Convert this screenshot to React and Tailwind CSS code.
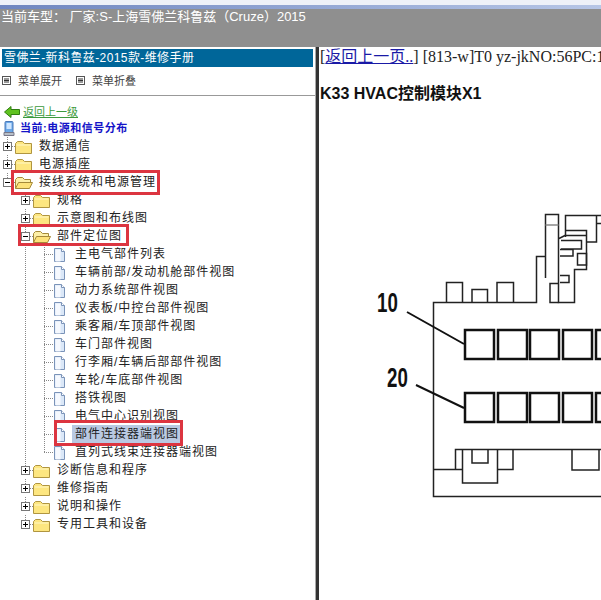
import React from "react";

const cjk = { fontFamily: '"Liberation Sans","Noto Sans CJK SC",sans-serif' };

function Gutter({ level, kind, open, guides, last }) {
  // draws the tree connectors, the expander and the folder/document icon for a row
  const mid = 9;
  const boxX = level === 0 ? 7 : 25;
  return (
    <svg width="70" height="18" viewBox="0 0 70 18" className="shrink-0 block">
      {guides.map((g) => (
        <line key={g} x1={g + 0.5} y1="0" x2={g + 0.5} y2="18" stroke="#888" strokeDasharray="1 1" />
      ))}
      {kind === "doc" ? (
        <>
          <line x1="44.5" y1="0" x2="44.5" y2={last ? 9 : 18} stroke="#888" strokeDasharray="1 1" />
          <line x1="44" y1="9.5" x2="54" y2="9.5" stroke="#888" strokeDasharray="1 1" />
          <path d="M54.5 3.5h7l3 3v10h-10z" fill="#dbe8f8" stroke="#7a93b8" />
          <path d="M55.5 4.5h5v12h-5z" fill="#f6f9fe" />
          <path d="M61.5 3.5v3h3" fill="#fff" stroke="#7a93b8" />
        </>
      ) : (
        <g transform={`translate(${boxX - 7} 0)`}>
          <line x1="7.5" y1={level === 0 ? 0 : 0} x2="7.5" y2="5" stroke="#888" strokeDasharray="1 1" />
          <line x1="12" y1="9.5" x2="16" y2="9.5" stroke="#888" strokeDasharray="1 1" />
          <rect x="3.5" y="5.5" width="8" height="8" fill="#fff" stroke="#777" />
          <line x1="5" y1="9.5" x2="10" y2="9.5" stroke="#000" />
          {!open && <line x1="7.5" y1="7" x2="7.5" y2="12" stroke="#000" />}
          {open ? (
            <>
              <path d="M15.5 15.5v-9l2-2h5l2 2h6v3" fill="#fdf0a8" stroke="#a58a3a" />
              <path d="M15.5 15.5l3-6h14l-3 6z" fill="#fde27a" stroke="#a58a3a" />
            </>
          ) : (
            <>
              <path d="M15.5 6.5l2-2h5l2 2h7v10h-16z" fill="#fde680" stroke="#b09540" />
              <path d="M16.5 7.5h14v1h-14z" fill="#fff8c8" />
            </>
          )}
        </g>
      )}
    </svg>
  );
}

function Row({ label, level, kind = "folder", open, guides = [], last, mark, selected, labelX }) {
  const width = labelX;
  return (
    <div className={`relative isolate flex h-[18px] items-center ${mark ? "z-10" : ""}`}>
      {mark && <div className={`absolute -z-10 bg-white ${mark}`} />}
      <div className="relative shrink-0 overflow-hidden" style={{ width }}>
        <Gutter level={level} kind={kind} open={open} guides={guides} last={last} />
      </div>
      <span
        className={`whitespace-nowrap text-[12px] leading-[18px] tracking-[1px] text-[#222] ${selected ? "bg-[#b9c9e2] pr-[3px] pl-[3px] -ml-[3px]" : ""}`}
        style={cjk}
      >
        {label}
      </span>
      {mark && <div className={`absolute z-10 border-[3px] border-[#dc3540] ${mark}`} />}
    </div>
  );
}

function MenuIcon() {
  return (
    <svg width="10" height="10" viewBox="0 0 10 10" className="shrink-0">
      <rect x="0.5" y="0.5" width="8" height="8" fill="#fff" stroke="#555" />
      <path d="M2 3h5M2 4.5h5M2 6h5" stroke="#333" />
    </svg>
  );
}

function Diagram() {
  const boxes = [464, 497, 529, 562, 595];
  return (
    <svg width="282" height="395" viewBox="319 205 282 395" className="block" fill="none" stroke="#222" strokeWidth="1.5">
      <path d="M601 497.5H433.5V303.5H536.5V257.5H545" />
      <path d="M446.5 303V283.5H462.5V303M472 303V290.5H487.5V303M497 303V283.5H513.5V303" />
      <path d="M545.5 279V215.5H558.5V303.5H574.5V270.5H586.5V231.5H565.5" />
      <path d="M545.5 226H558.5" stroke="#888" />
      <path d="M558.5 284.5H550V303.5H558.5" />
      <path d="M565.5 238V216.5H601M596.5 216.5V243H586.5M597 224.5H601" />
      <path d="M565.5 236.5H586M561 241.5H581.5V250H561M560 250.5H573V257H560M577.5 254.5H586.5V266H577.5ZM560 276.5H569V283.5H560M559 239.5L566 236" />
      <path d="M455.5 470.5V450.5H601M433 470.5H462.5" />
      <path d="M462.5 450.5V484H497.5V450.5M472 450.5V464H488V450.5M497.5 470.5H513V450.5M572 450.5V471H599V450.5" />
      <path d="M407 313L464 345M416 386L464 409" stroke="#111" strokeWidth="2" />
      {[330, 393].map((y) =>
        boxes.map((x) => (
          <rect key={`${x}-${y}`} x={x + 1} y={y + 1} width="29" height="29" stroke="#111" strokeWidth="2.5" />
        ))
      )}
      <text x="0" y="0" transform="translate(377 313) scale(0.78 1.15)" fill="#111" stroke="none" fontSize="24" fontWeight="700" fontFamily="Liberation Sans">10</text>
      <text x="0" y="0" transform="translate(387 388) scale(0.78 1.15)" fill="#111" stroke="none" fontSize="24" fontWeight="700" fontFamily="Liberation Sans">20</text>
    </svg>
  );
}

export default function App() {
  return (
    <div className="flex h-[600px] w-[601px] flex-col overflow-hidden bg-white" style={cjk}>
      <div className="h-[5px] shrink-0 bg-[#eef1f8]" />
      <div className="h-[4px] shrink-0 bg-gradient-to-r from-[#6f86c0] to-[#b7c6e6]" />
      <div className="h-[38px] shrink-0 bg-[#8f8f8f] pl-[1px] text-[13px] leading-[14px] text-white pt-[1px]">
        当前车型： 厂家:S-上海雪佛兰科鲁兹（Cruze）2015
      </div>
      <div className="flex min-h-0 flex-1">
        <div className="w-[316px] shrink-0 border-r border-[#aaa]">
          <div className="mx-[2px] mt-[2px] flex h-[18px] w-[311px] items-center bg-[#006699] pl-[2px] text-[12px] tracking-[0.4px] text-white">
            雪佛兰-新科鲁兹-2015款-维修手册
          </div>
          <div className="flex h-[28px] items-center border-b-0 pl-[2px] text-[11px] text-[#444]">
            <MenuIcon />
            <span className="ml-[6px] w-[58px]">菜单展开</span>
            <MenuIcon />
            <span className="ml-[6px]">菜单折叠</span>
          </div>
          <div className="h-[1px] bg-[#999]" />
          <div className="flex h-[24px] items-end pl-[4px] pb-[1px]">
            <svg width="16" height="12" viewBox="0 0 16 12" className="shrink-0 mb-[1px]">
              <path d="M0.5 6L7 0.5V3.5H15.5V8.5H7V11.5Z" fill="#5fc21f" stroke="#2f7d10" />
            </svg>
            <span className="ml-[3px] text-[11px] leading-[14px] text-[#3c9a3c] underline">返回上一级</span>
          </div>
          <div className="flex h-[17px] items-center pl-[3px]">
            <svg width="12" height="16" viewBox="0 0 12 16" className="shrink-0">
              <rect x="2" y="0.5" width="8" height="11" rx="1" fill="#6aa8e8" stroke="#4a78b8" />
              <rect x="3.5" y="2" width="5" height="6" fill="#cfe6ff" />
              <path d="M1 11.5h10v3H1z" fill="#b8bfc8" stroke="#778" />
            </svg>
            <span className="ml-[5px] text-[11px] font-bold tracking-[0.5px] text-[#1414c8]">当前:电源和信号分布</span>
          </div>
          <div className="pt-[0px]">
            <Row level={0} label="数据通信" labelX={39} />
            <Row level={0} label="电源插座" labelX={39} />
            <Row level={0} open label="接线系统和电源管理" labelX={39} mark="left-[11px] top-[-3px] h-[25px] w-[149px]" />
            <Row level={1} label="规格" labelX={57} guides={[]} />
            <Row level={1} label="示意图和布线图" labelX={57} />
            <Row level={1} open label="部件定位图" labelX={57} mark="left-[18px] top-[-3px] h-[22px] w-[111px]" />
            {["主电气部件列表", "车辆前部/发动机舱部件视图", "动力系统部件视图", "仪表板/中控台部件视图", "乘客厢/车顶部件视图", "车门部件视图", "行李厢/车辆后部部件视图", "车轮/车底部件视图", "搭铁视图", "电气中心识别视图"].map((t) => (
              <Row key={t} level={2} kind="doc" label={t} labelX={75} guides={[25]} />
            ))}
            <Row level={2} kind="doc" selected label="部件连接器端视图" labelX={75} guides={[25]} mark="left-[54px] top-[-5px] h-[26px] w-[129px]" />
            <Row level={2} kind="doc" last label="直列式线束连接器端视图" labelX={75} guides={[25]} />
            {["诊断信息和程序", "维修指南", "说明和操作", "专用工具和设备"].map((t) => (
              <Row key={t} level={1} label={t} labelX={57} />
            ))}
          </div>
        </div>
        <div className="w-[3px] shrink-0 bg-[#333]" />
        <div className="min-w-0 flex-1 overflow-hidden pl-[1px]">
          <div className="whitespace-nowrap pt-[1px] text-[16px] leading-[18px] text-[#222]" style={{ fontFamily: '"Liberation Serif","Noto Sans CJK SC",serif' }}>
            [<span className="text-[#1a1aa6] underline">返回上一页..</span>] [813-w]T0 yz-jkNO:56PC:1
          </div>
          <div className="mt-[18px] whitespace-nowrap text-[16px] font-bold leading-[20px] text-[#111]">K33 HVAC控制模块X1</div>
          <div className="-ml-[1px] mt-[100px]">
            <Diagram />
          </div>
        </div>
      </div>
    </div>
  );
}
